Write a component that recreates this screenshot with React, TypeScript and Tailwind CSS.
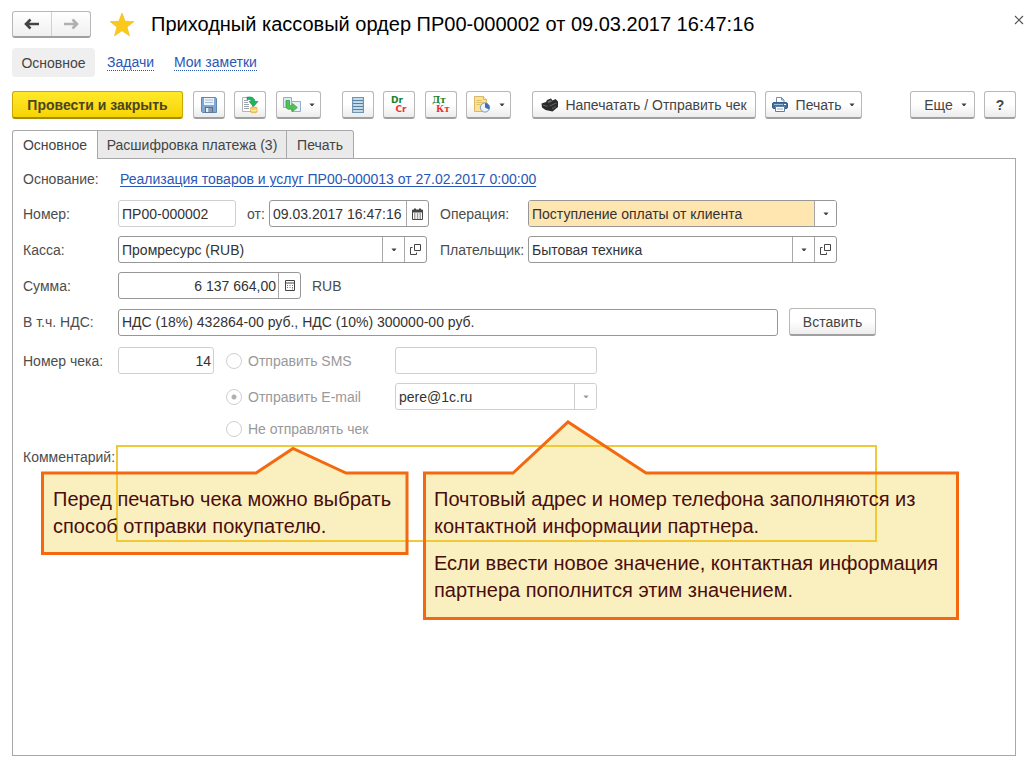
import { useState } from "react";
import type { ReactNode } from "react";

const Caret = ({ muted }: { muted?: boolean }) => (
  <svg width="6" height="4" viewBox="0 0 6 4" className={muted ? "text-[#999]" : "text-[#444]"}>
    <path d="M0.5 0.5h5L3.6 3H2.4z" fill="currentColor" />
  </svg>
);

const ArrowIcon = ({ flip }: { flip?: boolean }) => (
  <svg width="16" height="12" viewBox="0 0 16 12" className={flip ? "rotate-180" : ""}>
    <path d="M6.500 1.500L2 6l4.500 4.500M2 6h13" fill="none" stroke="currentColor" strokeWidth="2.600" />
  </svg>
);

const StarIcon = () => (
  <svg width="26" height="25" viewBox="0 0 26 25">
    <path
      d="M13 1l3.1 8.3 8.9.3-7 5.5 2.500 8.700L13 18.800l-7.500 5 2.500-8.700-7-5.500 8.900-.3z"
      fill="#fbc91b"
      stroke="#efb518"
      strokeWidth="0.600"
    />
  </svg>
);

const SaveIcon = () => (
  <svg width="16" height="16" viewBox="0 0 16 16">
    <path d="M.5.5h14l1 1v14h-14l-1-1z" fill="#7fa8d4" stroke="#5f87b0" />
    <rect x="3" y="1" width="10" height="7" fill="#eef4fb" />
    <path d="M4 3h8M4 5.500h8" stroke="#a3bedb" />
    <rect x="4" y="10" width="8" height="5.500" fill="#5d6f83" />
    <rect x="5" y="11" width="2.500" height="4" fill="#e6edf5" />
    <rect x="8" y="11" width="3" height="4" fill="#8b9bad" />
  </svg>
);

const PostIcon = () => (
  <svg width="18" height="18" viewBox="0 0 18 18">
    <path d="M1.500 1.500h10v14h-10z" fill="#fff" stroke="#b3b3b3" />
    <path d="M3 4.500h4M3 6.500h4M3 8.500h5M3 10.500h5M3 12.500h5" stroke="#9aa3ac" />
    <path
      d="M6 1.200c4.500-.9 7.800.8 8 4.300h3L12.500 10.500 8 5.500h2.500C10.200 3.800 8.600 3.200 6 3.500z"
      fill="#1fb560"
      stroke="#128a46"
      strokeWidth="0.600"
    />
    <path d="M9.500 12c0-1.300 6.500-1.300 6.500 0v3.800c0 1.300-6.500 1.300-6.500 0z" fill="#f9d35c" stroke="#d2a43c" strokeWidth="0.700" />
    <path d="M9.500 13.500c0 1.300 6.500 1.300 6.500 0" fill="none" stroke="#fff2b8" />
  </svg>
);

const BasedOnIcon = () => (
  <svg width="18" height="16" viewBox="0 0 18 16">
    <path d="M.5.500h8v10h-8z" fill="#dbe8f6" stroke="#93aecb" />
    <path d="M8.500 4.500h9v10h-9z" fill="#e8f1fa" stroke="#93aecb" />
    <path
      d="M3 3.500h3.500v5.300h3V6.500l4.800 4-4.800 4v-2.300H5L3 10.500z"
      fill="#52c455"
      stroke="#2c9a38"
      strokeWidth="0.700"
    />
  </svg>
);

const ListIcon = () => (
  <svg width="12" height="16" viewBox="0 0 12 16">
    <rect x="0.500" y="0.500" width="11" height="15" fill="#b4cfe3" stroke="#6f95b3" />
    <path d="M1 3.500h10M1 6.500h10M1 9.500h10M1 12.500h10" stroke="#56809f" />
    <path d="M2 2h8M2 5h8M2 8h8M2 11h8M2 14h8" stroke="#d3e4f1" />
  </svg>
);

const ReportIcon = () => (
  <svg width="18" height="17" viewBox="0 0 18 17">
    <path d="M1.500.5h9l3 3v12h-12z" fill="#fbe294" stroke="#d9b764" />
    <path d="M10.500.5v3h3" fill="#fff4ce" stroke="#d9b764" />
    <path d="M3.500 4.500h5M3.500 6.500h7M3.500 8.500h4" stroke="#e3bf68" />
    <circle cx="12" cy="11.500" r="4.600" fill="#eef4fa" stroke="#7f9bb9" />
    <path d="M12 11.500V7a4.500 4.500 0 0 1 4 6.500z" fill="#3d70b0" />
  </svg>
);

const FiscalIcon = () => (
  <svg width="18" height="14" viewBox="0 0 18 14">
    <path d="M.5 5.500L5 4l1-2 4-1.500 1.500 2L14.500 1 17 3.500V9l-5.500 4.500L4.500 12 1 9.500z" fill="#2b2b2b" />
    <path d="M6.500 3.500L10 2l1 1.500-3.500 1.500z" fill="#6f6f6f" />
    <path d="M2 7l4.500 1.500M8.500 8l7-3" stroke="#7a7a7a" strokeWidth="0.700" fill="none" />
    <path d="M11 9.800l4-2v1.500L11 11.500z" fill="#4f4f4f" />
  </svg>
);

const PrinterIcon = () => (
  <svg width="16" height="15" viewBox="0 0 16 15">
    <path d="M4.500 6V.5h5l2.500 2.500v3" fill="#fff" stroke="#6f8fae" />
    <path d="M9.500.5V3H12" fill="none" stroke="#6f8fae" />
    <rect x="0.500" y="5.500" width="15" height="6" rx="1.500" fill="#42709b" stroke="#305c86" />
    <path d="M2 7.500h9" stroke="#9fc0dd" />
    <rect x="12" y="7" width="2" height="1" fill="#fff" />
    <path d="M3.500 9.500h9v5h-9z" fill="#fff" stroke="#5c7fa3" />
    <path d="M5 12h6" stroke="#8aa9c5" />
  </svg>
);

const CalendarIcon = () => (
  <svg width="11" height="12" viewBox="0 0 11 12">
    <path d="M0.500 2h10v9.500h-10z" fill="#fff" stroke="#444" />
    <path d="M0 2h11v2.500H0zM2 .5h2V3H2zM7 .5h2V3H7z" fill="#444" />
    <path d="M2 6h1.500M4.800 6h1.500M7.500 6H9M2 8h1.500M4.800 8h1.500M7.500 8H9M2 10h1.500M4.800 10h1.500M7.500 10H9" stroke="#444" />
  </svg>
);

const CalculatorIcon = () => (
  <svg width="10" height="11" viewBox="0 0 10 11">
    <path d="M0.500.5h9v10h-9zM1 3h8" fill="none" stroke="#444" />
    <path d="M2 5.500h1M4.500 5.500h1M7 5.500h1M2 7.500h1M4.500 7.500h1M7 7.500h1M7 9h1" stroke="#777" />
  </svg>
);

const OpenIcon = () => (
  <svg width="11" height="11" viewBox="0 0 11 11">
    <path d="M4.500.5h6v6h-6z" fill="none" stroke="#444" />
    <path d="M2.500 3.500h-2v7h6v-2" fill="none" stroke="#444" />
  </svg>
);

interface ToolButtonProps {
  label?: string;
  className?: string;
  children: ReactNode;
}

const ToolButton = ({ label, className = "", children }: ToolButtonProps) => (
  <button
    type="button"
    aria-label={label}
    className={`flex h-7 shrink-0 items-center justify-center rounded-[3px] border border-b-2 border-[#b8b8b8] border-b-[#a0a0a0] bg-linear-to-b from-white from-50% to-[#ececec] text-sm whitespace-nowrap text-[#444] ${className}`}
  >
    {children}
  </button>
);

interface FieldProps {
  className: string;
  muted?: boolean;
  children: ReactNode;
}

const Field = ({ className, muted, children }: FieldProps) => (
  <div
    className={`flex h-[27px] shrink-0 overflow-hidden rounded-[3px] border bg-white text-sm text-[#333] ${
      muted ? "border-[#cfcfcf]" : "border-[#979797]"
    } ${className}`}
  >
    {children}
  </div>
);

const CellButton = ({ label, children }: { label: string; children: ReactNode }) => (
  <button
    type="button"
    aria-label={label}
    className="flex w-[22px] shrink-0 items-center justify-center border-l border-[#a8a8a8]"
  >
    {children}
  </button>
);

interface DropProps {
  id: string;
  value: string;
  label?: string;
  muted?: boolean;
  accent?: boolean;
}

const Drop = ({ id, value, label, muted, accent }: DropProps) => (
  <div className={`relative flex min-w-0 flex-1 ${accent ? "bg-[#ffe6b0]" : ""}`}>
    <select id={id} aria-label={label} className="w-full appearance-none bg-transparent pr-6 pl-[3px]">
      <option>{value}</option>
    </select>
    <span
      className={`pointer-events-none absolute inset-y-0 right-0 flex w-[22px] items-center justify-center border-l bg-white ${
        muted ? "border-[#cfcfcf]" : "border-[#a8a8a8]"
      }`}
    >
      <Caret muted={muted} />
    </span>
  </div>
);

const Label = ({ id, children }: { id: string; children: ReactNode }) => (
  <label htmlFor={id} className="w-[95px] shrink-0 whitespace-nowrap">
    {children}
  </label>
);

interface SendOptionProps {
  id: string;
  text: string;
  value: string;
  selected: string;
  onSelect: (value: string) => void;
}

const SendOption = ({ id, text, value, selected, onSelect }: SendOptionProps) => (
  <div className="flex w-[169px] shrink-0 items-center gap-1.5 text-[#999]">
    <input
      type="radio"
      id={id}
      name="send"
      checked={selected === value}
      onChange={() => onSelect(value)}
      className="size-4 appearance-none rounded-full border border-[#cfcfcf] bg-white checked:bg-[radial-gradient(circle,#b0b0b0_0_2px,transparent_3px)]"
    />
    <label htmlFor={id} className="whitespace-nowrap">{text}</label>
  </div>
);

const App = () => {
  const [send, setSend] = useState("email");

  return (
    <div className="relative flex min-h-screen flex-col bg-white pt-2.5 pr-2 pb-[11px] pl-3 font-['Liberation_Sans',Arial,sans-serif] text-sm text-[#4d4d4d]">
      <header className="flex h-7 items-center">
        <div className="flex h-[27px] w-[79px] rounded-[3px] border border-b-2 border-[#b8b8b8] border-b-[#a0a0a0] bg-linear-to-b from-white to-[#f0f0f0]">
          <button type="button" aria-label="Назад" className="flex flex-1 items-center justify-center text-[#444]">
            <ArrowIcon />
          </button>
          <button type="button" aria-label="Вперед" className="flex flex-1 items-center justify-center border-l border-[#d0d0d0] text-[#b0b0b0]">
            <ArrowIcon flip />
          </button>
        </div>
        <button type="button" aria-label="Избранное" className="ml-[18px]">
          <StarIcon />
        </button>
        <h1 className="ml-4 text-xl whitespace-nowrap text-black">
          Приходный кассовый ордер ПР00-000002 от 09.03.2017 16:47:16
        </h1>
        <button type="button" aria-label="Закрыть" className="-mr-2 mb-2 ml-auto text-[#555]">
          <svg width="10" height="10" viewBox="0 0 10 10">
            <path d="M1 1l8 8M9 1l-8 8" stroke="currentColor" strokeWidth="1.200" />
          </svg>
        </button>
      </header>

      <nav className="mt-2.5 flex h-[29px] items-center">
        <a href="#main" className="flex h-full w-[83px] items-center justify-center rounded-[4px] bg-[#efefef] text-[#444]">
          Основное
        </a>
        <a href="#tasks" className="ml-3 border-b border-dotted border-[#2a56b5] leading-4 text-[#2a56b5]">Задачи</a>
        <a href="#notes" className="ml-5 border-b border-dotted border-[#2a56b5] leading-4 text-[#2a56b5]">Мои заметки</a>
      </nav>

      <div className="mt-3.5 flex items-center">
        <button
          type="button"
          className="h-7 w-[171px] shrink-0 rounded-[3px] border border-b-2 border-[#c9a800] border-b-[#a88c00] bg-linear-to-b from-[#ffe928] to-[#f7d400] text-sm font-bold whitespace-nowrap text-[#4d4520]"
        >
          Провести и закрыть
        </button>
        <ToolButton label="Записать" className="ml-2.5 w-8"><SaveIcon /></ToolButton>
        <ToolButton label="Провести" className="ml-[9px] w-8"><PostIcon /></ToolButton>
        <ToolButton label="Создать на основании" className="ml-2.5 w-[45px] gap-2"><BasedOnIcon /><Caret /></ToolButton>
        <ToolButton label="Список" className="ml-[21px] w-8"><ListIcon /></ToolButton>
        <ToolButton label="Проводки МУ" className="ml-[9px] w-8">
          <span className="flex flex-col font-['DejaVu_Sans',sans-serif] text-[9px] leading-[9px] font-bold">
            <span className="pr-1 text-[#16832a]">Dr</span>
            <span className="pl-1 text-[#f03030]">Cr</span>
          </span>
        </ToolButton>
        <ToolButton label="Проводки" className="ml-2.5 w-8">
          <span className="flex flex-col font-['DejaVu_Serif',serif] text-[9px] leading-[9px] font-bold">
            <span className="pr-1 text-[#16832a]">Дт</span>
            <span className="pl-1 text-[#f03030]">Кт</span>
          </span>
        </ToolButton>
        <ToolButton label="Отчеты" className="ml-[9px] w-[45px] gap-2"><ReportIcon /><Caret /></ToolButton>
        <ToolButton className="ml-[21px] w-[224px] gap-1.5"><FiscalIcon />Напечатать / Отправить чек</ToolButton>
        <ToolButton className="ml-[9px] w-[97px] gap-2"><PrinterIcon />Печать<Caret /></ToolButton>
        <ToolButton className="ml-auto w-[65px] gap-2 pl-1.5">Еще<Caret /></ToolButton>
        <ToolButton label="Справка" className="ml-[9px] w-8 font-bold">?</ToolButton>
      </div>

      <div role="tablist" className="relative -mb-px mt-[11px] flex h-[29px] text-[#444]">
        <button type="button" role="tab" aria-selected="true" className="w-[86px] rounded-tl-[3px] border border-b-0 border-[#a8a8a8] bg-white">
          Основное
        </button>
        <button type="button" role="tab" aria-selected="false" className="w-[189px] border border-l-0 border-[#a8a8a8] bg-[#eaeaea] whitespace-nowrap">
          Расшифровка платежа (3)
        </button>
        <button type="button" role="tab" aria-selected="false" className="w-[67px] rounded-tr-[3px] border border-l-0 border-[#a8a8a8] bg-[#eaeaea]">
          Печать
        </button>
      </div>

      <main className="flex flex-1 flex-col border border-[#a8a8a8] pt-2.5 pl-2.5">
        <div className="flex h-5 items-center">
          <span className="w-[97px] shrink-0">Основание:</span>
          <a href="#basis" className="text-[#2a56b5] underline underline-offset-2">
            Реализация товаров и услуг ПР00-000013 от 27.02.2017 0:00:00
          </a>
        </div>

        <div className="mt-[11px] flex flex-col gap-[9px]">
          <div className="flex items-center">
            <Label id="number">Номер:</Label>
            <Field muted className="w-[118px]">
              <input id="number" defaultValue="ПР00-000002" className="w-full px-[3px]" />
            </Field>
            <label htmlFor="date" className="ml-[11px] w-[22px] shrink-0">от:</label>
            <Field className="w-[160px]">
              <input id="date" defaultValue="09.03.2017 16:47:16" className="min-w-0 flex-1 pl-[3px]" />
              <CellButton label="Календарь"><CalendarIcon /></CellButton>
            </Field>
            <label htmlFor="operation" className="ml-[11px] w-[88px] shrink-0">Операция:</label>
            <Field className="w-[309px]">
              <Drop id="operation" value="Поступление оплаты от клиента" accent />
            </Field>
          </div>

          <div className="flex items-center">
            <Label id="cashbox">Касса:</Label>
            <Field className="w-[309px]">
              <Drop id="cashbox" value="Промресурс (RUB)" />
              <CellButton label="Открыть кассу"><OpenIcon /></CellButton>
            </Field>
            <label htmlFor="payer" className="ml-[13px] w-[88px] shrink-0">Плательщик:</label>
            <Field className="w-[309px]">
              <Drop id="payer" value="Бытовая техника" />
              <CellButton label="Открыть плательщика"><OpenIcon /></CellButton>
            </Field>
          </div>

          <div className="flex items-center">
            <Label id="sum">Сумма:</Label>
            <Field className="w-[183px]">
              <input id="sum" defaultValue="6 137 664,00" className="min-w-0 flex-1 pr-[2px] text-right" />
              <CellButton label="Калькулятор"><CalculatorIcon /></CellButton>
            </Field>
            <span className="ml-[11px]">RUB</span>
          </div>

          <div className="flex items-center">
            <Label id="vat">В т.ч. НДС:</Label>
            <Field className="w-[660px]">
              <input id="vat" defaultValue="НДС (18%) 432864-00 руб., НДС (10%) 300000-00 руб." className="w-full px-[3px]" />
            </Field>
            <ToolButton className="ml-[11px] w-[87px]">Вставить</ToolButton>
          </div>
        </div>

        <div className="mt-[11px] flex items-start">
          <div className="flex items-center">
            <Label id="receipt">Номер чека:</Label>
            <Field muted className="w-24">
              <input id="receipt" defaultValue="14" className="w-full px-[2px] text-right" />
            </Field>
          </div>
          <fieldset className="ml-3 flex flex-col gap-[9px]">
            <div className="flex items-center">
              <SendOption id="send-sms" text="Отправить SMS" value="sms" selected={send} onSelect={setSend} />
              <Field muted className="w-[202px]">
                <input aria-label="Телефон" className="w-full px-[3px]" />
              </Field>
            </div>
            <div className="flex items-center">
              <SendOption id="send-email" text="Отправить E-mail" value="email" selected={send} onSelect={setSend} />
              <Field muted className="w-[202px]">
                <Drop id="email" label="E-mail" value="pere@1c.ru" muted />
              </Field>
            </div>
            <SendOption id="send-none" text="Не отправлять чек" value="none" selected={send} onSelect={setSend} />
          </fieldset>
        </div>

        <div className="mt-1.5 flex items-start">
          <label htmlFor="comment" className="w-[93px] shrink-0 pt-0.5 whitespace-nowrap">Комментарий:</label>
          <textarea id="comment" className="h-[97px] w-[761px] resize-none border-2 border-[#f0c93a] bg-white" />
        </div>
      </main>

      {/* hints over the form */}
      <aside className="absolute top-[446px] left-10 h-[110px] w-[369px] pt-10 pl-[13px] text-xl leading-[27px] whitespace-nowrap text-[#4a0d0d]">
        <svg viewBox="0 0 369 110" className="absolute inset-0 size-full">
          <path
            d="M2.500 27H216L253 2.500 306 27H367V107.500H2.500z"
            fill="#eecd2a"
            fillOpacity="0.3"
            stroke="#f4690f"
            strokeWidth="3"
          />
        </svg>
        <p className="relative">
          Перед печатью чека можно выбрать
          <br />
          способ отправки покупателю.
        </p>
      </aside>
      <aside className="absolute top-[419px] left-[422px] h-[202px] w-[538px] pt-[67px] pl-3 text-xl leading-[27px] whitespace-nowrap text-[#4a0d0d]">
        <svg viewBox="0 0 538 202" className="absolute inset-0 size-full">
          <path
            d="M2.500 54H91L146 3 224 54H535.500V199.500H2.500z"
            fill="#eecd2a"
            fillOpacity="0.3"
            stroke="#f4690f"
            strokeWidth="3"
          />
        </svg>
        <p className="relative">
          Почтовый адрес и номер телефона заполняются из
          <br />
          контактной информации партнера.
        </p>
        <p className="relative mt-2.5">
          Если ввести новое значение, контактная информация
          <br />
          партнера пополнится этим значением.
        </p>
      </aside>
    </div>
  );
};

export default App;
